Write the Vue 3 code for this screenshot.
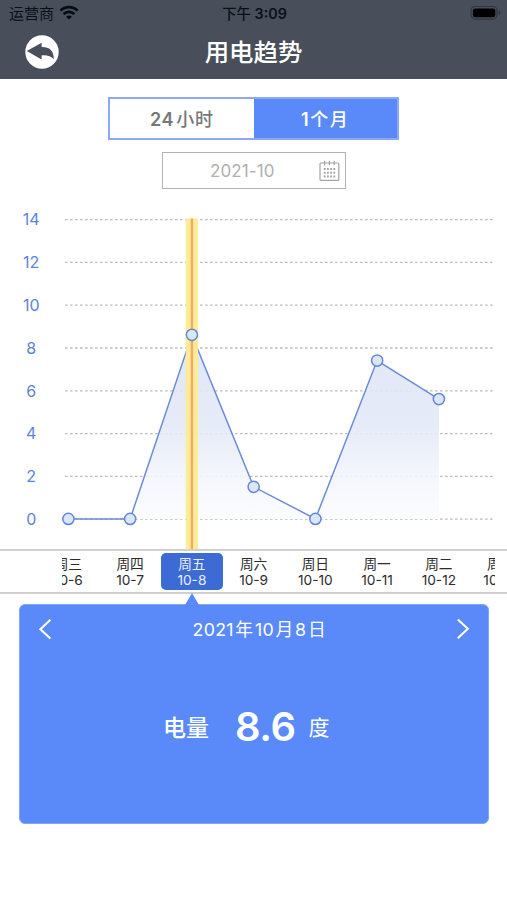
<script setup>
import { ref, computed } from 'vue'

const ticks = [14, 12, 10, 8, 6, 4, 2, 0]
const days = [
  { name: '周三', date: '10-6', value: 0 },
  { name: '周四', date: '10-7', value: 0 },
  { name: '周五', date: '10-8', value: 8.6 },
  { name: '周六', date: '10-9', value: 1.5 },
  { name: '周日', date: '10-10', value: 0 },
  { name: '周一', date: '10-11', value: 7.4 },
  { name: '周二', date: '10-12', value: 5.6 },
  { name: '周三', date: '10-13', value: null }
]
const selected = ref(2)
const tab = ref('month')

const step = 61.75
const yOf = (v) => 320.9 - v * 21.4
const points = computed(() =>
  days.filter((d) => d.value !== null).map((d, i) => ({ x: 68.4 + i * step, y: yOf(d.value) }))
)
const line = computed(() => points.value.map((p) => `${p.x},${p.y}`).join(' '))
const area = computed(() => {
  const p = points.value
  return `${p[0].x},${yOf(0)} ${line.value} ${p[p.length - 1].x},${yOf(0)}`
})
const marker = computed(() => points.value[selected.value].x)

function move(delta) {
  selected.value = Math.min(points.value.length - 1, Math.max(0, selected.value + delta))
}
</script>

<template>
  <div class="screen">
    <header class="header">
      <div class="status">
        <div class="carrier">
          <span>运营商</span>
          <svg width="20" height="16" viewBox="0 0 20 16">
            <g fill="none" stroke="#080b12" stroke-width="2.7">
              <path d="M1.4 5.6a12.2 12.2 0 0 1 17.2 0" />
              <path d="M4.6 9.1a7.6 7.6 0 0 1 10.8 0" />
            </g>
            <path d="M10 14.6 7.2 11.8a4 4 0 0 1 5.6 0Z" fill="#080b12" />
          </svg>
        </div>
        <span class="clock">下午 <b>3:09</b></span>
        <svg class="battery" width="32" height="16" viewBox="0 0 32 16">
          <rect x="1" y="1.5" width="26" height="12.6" rx="4" fill="none" stroke="#30353f" stroke-width="1.2" />
          <rect x="2.9" y="3.4" width="22.4" height="8.8" rx="2.2" fill="#000" />
          <path d="M28.6 5.8v4.2q1.8-.6 1.8-2.1t-1.8-2.1Z" fill="#30353f" />
        </svg>
      </div>
      <div class="titlebar">
        <svg class="back" width="34" height="34" viewBox="0 0 34 34">
          <circle cx="17" cy="17" r="16.7" fill="#fff" />
          <path d="M1.8 16 16.6 7.8v4.2c7.8-.2 12.2 3.4 12.2 12.2-2.6-3-6.6-4.2-12.2-3.8v4Z" fill="#484f5b" />
        </svg>
        <h1>用电趋势</h1>
      </div>
    </header>

    <div class="tabs">
      <button :class="{ active: tab === 'day' }" @click="tab = 'day'"><span class="num">24</span>小时</button>
      <button :class="{ active: tab === 'month' }" @click="tab = 'month'"><span>1</span>个月</button>
    </div>

    <div class="month">
      <span>2021-10</span>
      <svg width="22" height="22" viewBox="0 0 22 22" fill="none" stroke="#a4a4a4" stroke-width="1.2">
        <rect x="1" y="3" width="18.8" height="17.4" rx="1" />
        <path d="M5.6 .8v4.4M10.4 .8v4.4M15.2 .8v4.4" />
        <path d="M4.8 9h11.4M4.8 12.8h11.4M4.8 16.6h11.4" stroke-width="2" stroke-dasharray="1.8 1.4" />
      </svg>
    </div>

    <svg class="chart" width="507" height="351" viewBox="0 0 507 351">
      <defs>
        <linearGradient id="fill" gradientUnits="userSpaceOnUse" x1="0" y1="137" x2="0" y2="321">
          <stop offset="0" stop-color="#dce4f5" />
          <stop offset="0.5" stop-color="#e3e9f7" />
          <stop offset="0.75" stop-color="#f2f5fc" />
          <stop offset="1" stop-color="#fbfcfe" />
        </linearGradient>
      </defs>
      <g v-for="t in ticks" :key="t">
        <text class="tick" x="31.2" :y="yOf(t) + 6" text-anchor="middle">{{ t }}</text>
        <line x1="65" x2="493" :y1="yOf(t) + 0.3" :y2="yOf(t) + 0.3" stroke="#bdbdbd" stroke-width="1.3" stroke-dasharray="2.6 2.4" />
      </g>
      <polygon :points="area" fill="url(#fill)" fill-opacity="0.9" />
      <polyline :points="line" fill="none" stroke="#6b8bd8" stroke-width="1.5" />
      <rect :x="marker - 6.2" y="20.5" width="12.4" height="330.5" fill="#fdec93" fill-opacity="0.95" />
      <rect :x="marker - 1.2" y="20.5" width="2.4" height="330.5" fill="#f6a966" />
      <circle v-for="(p, i) in points" :key="i" :cx="p.x" :cy="p.y" r="5.6" fill="#dbe7f9" stroke="#6488d3" stroke-width="1.5" />
    </svg>

    <div class="strip">
      <div class="window">
        <div class="days">
          <div v-for="(d, i) in days" :key="d.date" class="day" :class="{ selected: i === selected }">
            <span>{{ d.name }}</span>
            <span>{{ d.date }}</span>
          </div>
        </div>
      </div>
    </div>

    <section class="card">
      <svg class="pointer" width="14" height="12" viewBox="0 0 14 12">
        <path d="M7 0 L14 12 H0Z" fill="#5a8afa" />
      </svg>
      <div class="card-head">
        <svg width="14" height="22" viewBox="0 0 14 22" @click="move(-1)">
          <path d="M12.4 1.8 2.4 11.2 12.4 20.6" fill="none" stroke="#fff" stroke-width="2.1" />
        </svg>
        <span class="date">2021<i>年</i>10<i>月</i>8<i>日</i></span>
        <svg width="14" height="22" viewBox="0 0 14 22" @click="move(1)">
          <path d="M1.8 1.4 11.8 10.8 1.8 20.2" fill="none" stroke="#fff" stroke-width="2.1" />
        </svg>
      </div>
      <div class="reading">
        <span class="label">电量</span>
        <strong>{{ days[selected].value }}</strong>
        <span class="unit">度</span>
      </div>
    </section>
  </div>
</template>

<style>
body {
  margin: 0;
  background: #fff;
}
</style>

<style scoped>
.screen {
  width: 507px;
  height: 900px;
  overflow: hidden;
  background: #fff;
  font-family: Inter, 'Noto Sans CJK SC', sans-serif;
}
.header {
  height: 79px;
  background: #484f5b;
}
.status {
  display: grid;
  grid-template-columns: 1fr auto 1fr;
  height: 27px;
  padding: 0 5px 0 7px;
  align-items: center;
  line-height: 27px;
  color: #0b0f17;
}
.carrier {
  display: flex;
  align-items: center;
  gap: 5px;
  padding-left: 2px;
  font-size: 15px;
}
.carrier svg {
  margin-top: -2px;
}
.clock {
  font-weight: 500;
  font-size: 14.3px;
}
.clock b {
  font-weight: 600;
}
.battery {
  justify-self: end;
  margin-top: -1px;
}
.titlebar {
  display: grid;
  grid-template-columns: 1fr auto 1fr;
  height: 50px;
  align-items: center;
}
.back {
  margin-left: 25px;
}
h1 {
  margin: 0;
  font-size: 24.4px;
  line-height: 48px;
  font-weight: 500;
  color: #fff;
}
.tabs {
  display: flex;
  box-sizing: border-box;
  width: 291px;
  height: 43px;
  margin: 18px 0 0 108px;
  border: 2px solid #8ba9f6;
}
.tabs button {
  flex: 1;
  padding: 0 0 1px;
  border: 0;
  background: #fff;
  color: #777;
  font: inherit;
  font-size: 18px;
  font-weight: 500;
  letter-spacing: 0.7px;
}
.tabs button span {
  font-weight: 600;
}
.tabs .num {
  margin-right: 2px;
}
.tabs .active {
  background: #5a8afa;
  color: #fff;
  letter-spacing: 1.6px;
}
.month {
  display: flex;
  align-items: center;
  justify-content: space-between;
  box-sizing: border-box;
  width: 184px;
  height: 37px;
  margin: 12px 0 0 162px;
  padding: 0 4px 0 47px;
  border: 1.5px solid #b2b2b2;
  font-size: 17px;
  letter-spacing: 0.1px;
  color: #b0b0b0;
}
.chart {
  display: block;
  margin-top: 9px;
}
.tick {
  font-size: 16px;
  fill: #5b83d9;
}
.strip {
  box-sizing: border-box;
  height: 45px;
  border-top: 2px solid #d0d0d0;
  border-bottom: 2px solid #d0d0d0;
}
.window {
  width: 433px;
  height: 41px;
  margin-left: 62px;
  overflow: hidden;
}
.days {
  display: flex;
  width: 494px;
  margin-left: -24.5px;
  padding-top: 2px;
}
.day {
  display: flex;
  flex: 0 0 61.75px;
  flex-direction: column;
  align-items: center;
  height: 37px;
  padding-top: 3px;
  box-sizing: border-box;
  border-radius: 5px;
  font-size: 13.7px;
  line-height: 16px;
  color: #2c2c2c;
}
.day.selected {
  background: #3d6bd5;
  color: #e9effc;
}
.card {
  position: relative;
  box-sizing: border-box;
  width: 470px;
  height: 220px;
  margin: 10px 0 0 19px;
  border: 1px solid #83a5f8;
  border-radius: 6px;
  background: #5a8afa;
  color: #fff;
}
.pointer {
  position: absolute;
  left: 165px;
  top: -12px;
}
.card-head {
  display: flex;
  align-items: center;
  justify-content: space-between;
  height: 48px;
  padding: 0 18px;
}
.date {
  margin: -2px 0 0 12px;
  font-size: 17.8px;
  letter-spacing: 0.3px;
}
.date i {
  font-style: normal;
  margin: 0 1.5px;
}
.reading {
  display: flex;
  align-items: center;
  height: 146px;
  padding-left: 143px;
}
.label {
  font-size: 23px;
  font-weight: 500;
}
strong {
  margin-left: 26px;
  font-size: 40px;
  font-weight: 600;
  letter-spacing: -0.5px;
}
.unit {
  margin-left: 13px;
  font-size: 21px;
}
</style>
